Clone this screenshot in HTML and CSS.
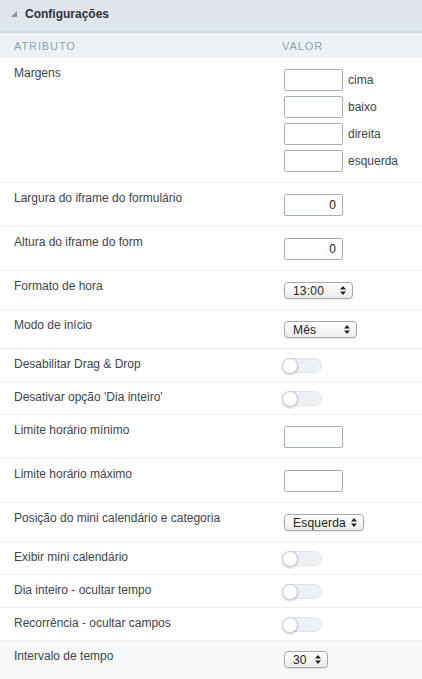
FILE: index.html
```html
<!DOCTYPE html>
<html lang="pt">
<head>
<meta charset="utf-8">
<link rel="stylesheet" href="styles.css">
</head>
<body>
<div class="panel">
  <div class="panel-head"><span class="tri"></span>Configurações</div>
  <div class="cols"><span class="col-attr">ATRIBUTO</span><span class="col-val">VALOR</span></div>

  <div class="row">
    <div class="label">Margens</div>
    <div class="ctrl margins">
      <div class="m"><span class="inp"></span><span class="mlabel">cima</span></div>
      <div class="m"><span class="inp"></span><span class="mlabel">baixo</span></div>
      <div class="m"><span class="inp"></span><span class="mlabel">direita</span></div>
      <div class="m"><span class="inp"></span><span class="mlabel">esquerda</span></div>
    </div>
  </div>

  <div class="row">
    <div class="label">Largura do iframe do formulário</div>
    <div class="ctrl"><span class="inp num">0</span></div>
  </div>

  <div class="row">
    <div class="label">Altura do iframe do form</div>
    <div class="ctrl"><span class="inp num">0</span></div>
  </div>

  <div class="row">
    <div class="label">Formato de hora</div>
    <div class="ctrl sel-ctrl"><span class="sel w69">13:00<svg class="arr" width="6" height="9" viewBox="0 0 6 9"><path d="M0 3.5L3 0L6 3.5Z M0 5.5L3 9L6 5.5Z" fill="#222"/></svg></span></div>
  </div>

  <div class="row">
    <div class="label">Modo de início</div>
    <div class="ctrl sel-ctrl"><span class="sel w73">Mês<svg class="arr" width="6" height="9" viewBox="0 0 6 9"><path d="M0 3.5L3 0L6 3.5Z M0 5.5L3 9L6 5.5Z" fill="#222"/></svg></span></div>
  </div>

  <div class="row tog-row">
    <div class="label">Desabilitar Drag &amp; Drop</div>
    <div class="ctrl"><span class="toggle"><span class="knob"></span></span></div>
  </div>

  <div class="row tog-row">
    <div class="label">Desativar opção 'Dia inteiro'</div>
    <div class="ctrl"><span class="toggle"><span class="knob"></span></span></div>
  </div>

  <div class="row">
    <div class="label">Limite horário mínimo</div>
    <div class="ctrl"><span class="inp"></span></div>
  </div>

  <div class="row">
    <div class="label">Limite horário máximo</div>
    <div class="ctrl"><span class="inp"></span></div>
  </div>

  <div class="row">
    <div class="label">Posição do mini calendário e categoria</div>
    <div class="ctrl sel-ctrl"><span class="sel w80">Esquerda<svg class="arr" width="6" height="9" viewBox="0 0 6 9"><path d="M0 3.5L3 0L6 3.5Z M0 5.5L3 9L6 5.5Z" fill="#222"/></svg></span></div>
  </div>

  <div class="row tog-row">
    <div class="label">Exibir mini calendário</div>
    <div class="ctrl"><span class="toggle"><span class="knob"></span></span></div>
  </div>

  <div class="row tog-row">
    <div class="label">Dia inteiro - ocultar tempo</div>
    <div class="ctrl"><span class="toggle"><span class="knob"></span></span></div>
  </div>

  <div class="row tog-row">
    <div class="label">Recorrência - ocultar campos</div>
    <div class="ctrl"><span class="toggle"><span class="knob"></span></span></div>
  </div>

  <div class="row hover last">
    <div class="label">Intervalo de tempo</div>
    <div class="ctrl sel-ctrl2"><span class="sel w44">30<svg class="arr" width="6" height="9" viewBox="0 0 6 9"><path d="M0 3.5L3 0L6 3.5Z M0 5.5L3 9L6 5.5Z" fill="#222"/></svg></span></div>
  </div>
</div>
</body>
</html>
```

FILE: styles.css
```css
html, body {
  margin: 0;
  padding: 0;
  background: #ffffff;
}
body {
  font-family: "Liberation Sans", Arial, sans-serif;
  font-size: 12px;
  color: #3d454d;
}
.panel {
  width: 422px;
}
.panel-head {
  height: 31px;
  box-sizing: border-box;
  background: #dfe5eb;
  border-bottom: 2px solid #d2dae2;
  height: 33px;
  display: flex;
  align-items: center;
  padding-left: 11px;
  padding-bottom: 4px;
  font-weight: bold;
  font-size: 12px;
  color: #2f3338;
}
.tri {
  width: 0;
  height: 0;
  border-left: 6px solid transparent;
  border-bottom: 6px solid #8a939c;
  margin-right: 8px;
  margin-top: 1px;
}
.cols {
  height: 25px;
  background: #eef2f5;
  display: flex;
  align-items: center;
  font-size: 11px;
  letter-spacing: 0.9px;
  color: #8ba2af;
  padding-left: 14px;
  padding-top: 1px;
  box-sizing: border-box;
}
.col-attr {
  width: 268px;
}
.row {
  display: flex;
  align-items: flex-start;
  border-bottom: 1px solid #eceff2;
  padding: 0 0 10px 14px;
}
.row.last {
  border-bottom: none;
  padding-bottom: 12px;
}
.row.hover {
  background: #f7f8fa;
}
.label {
  width: 270px;
  flex: none;
  padding-top: 8px;
  line-height: 15px;
  font-size: 12px;
}
.ctrl {
  padding-top: 11px;
}
.sel-ctrl {
  padding-top: 11px;
}
.sel-ctrl2 {
  padding-top: 10px;
}
.tog-row {
  padding-bottom: 8px;
}
.tog-row .ctrl {
  padding-top: 9px;
}
.margins {
  display: flex;
  flex-direction: column;
  gap: 5px;
}
.m {
  display: flex;
  align-items: center;
  gap: 5px;
}
.mlabel {
  font-size: 12px;
  color: #3d454d;
}
.inp {
  display: block;
  width: 59px;
  height: 22px;
  box-sizing: border-box;
  border: 1px solid #a7b0ba;
  border-radius: 2px;
  background: #fff;
  font-size: 12px;
  color: #222;
  line-height: 20px;
  text-align: right;
  padding-right: 6px;
}
.sel {
  display: flex;
  align-items: center;
  justify-content: space-between;
  height: 17px;
  box-sizing: border-box;
  border: 1px solid #a4a7ab;
  border-radius: 4px;
  background: linear-gradient(#ffffff, #ededed);
  box-shadow: 0 1px 1px rgba(0,0,0,0.08);
  padding: 0 6px 0 8px;
  font-size: 12px;
  color: #222;
  letter-spacing: 0.2px;
}
.w69 { width: 69px; }
.w73 { width: 73px; }
.w80 { width: 80px; }
.w44 { width: 44px; }
.arr {
  flex: none;
}
.toggle {
  display: block;
  position: relative;
  width: 40px;
  height: 15px;
  box-sizing: border-box;
  border: 1px solid #dfe4e9;
  background: #eef1f4;
  border-radius: 8px;
  margin-left: -2px;
}
.knob {
  position: absolute;
  left: -1px;
  top: -1px;
  width: 16px;
  height: 16px;
  box-sizing: border-box;
  border-radius: 50%;
  background: #fff;
  border: 1px solid #c9cfd5;
  box-shadow: 0 1px 2px rgba(0,0,0,0.2);
}
```
